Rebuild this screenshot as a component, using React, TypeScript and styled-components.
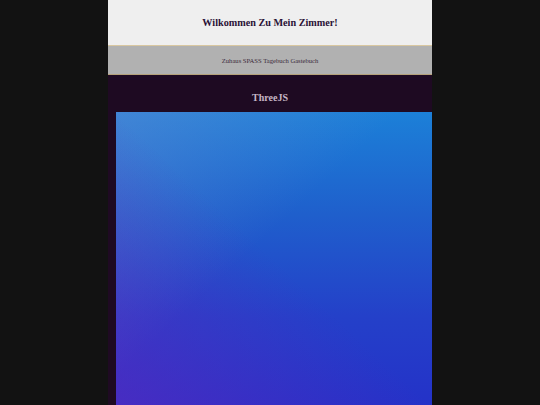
import styled, { createGlobalStyle } from 'styled-components';

const GlobalStyle = createGlobalStyle`
  html, body {
    margin: 0;
    padding: 0;
    height: 100%;
    background: #121212;
    overflow: hidden;
  }
  #root {
    height: 100%;
  }
`;

const Page = styled.div`
  width: 324px;
  height: 100%;
  margin: 0 auto;
  display: flex;
  flex-direction: column;
  background: #1e0a22;
  font-family: 'Liberation Serif', 'Times New Roman', serif;
`;

const Header = styled.header`
  height: 45px;
  display: flex;
  align-items: center;
  justify-content: center;
  background: #efefef;
  border-bottom: 1px solid #d9c7a0;
`;

const Title = styled.h1`
  margin: 0;
  font-size: 10.2px;
  font-weight: bold;
  color: #2a1236;
`;

const Nav = styled.nav`
  height: 28px;
  display: flex;
  align-items: center;
  justify-content: center;
  background: #b1b1b1;
  border-bottom: 1px solid #b5a27a;
`;

const NavLinks = styled.div`
  font-size: 6.6px;
  color: #3a2a3a;
  white-space: pre;
`;

const Section = styled.section`
  flex: 1;
  display: flex;
  flex-direction: column;
  padding-left: 8px;
  min-height: 0;
`;

const SectionTitle = styled.h2`
  margin: 0;
  height: 37px;
  box-sizing: border-box;
  padding: 7px 8px 0 0;
  display: flex;
  align-items: center;
  justify-content: center;
  font-size: 10px;
  font-weight: bold;
  color: #c6b6c6;
`;

const Canvas = styled.div`
  flex: 1;
  background:
    linear-gradient(to top right, rgba(95, 40, 190, 0.6) 0%, rgba(95, 40, 190, 0) 50%),
    linear-gradient(to bottom right, rgba(110, 140, 210, 0.45) 0%, rgba(110, 140, 210, 0) 45%),
    linear-gradient(to bottom, #1c80d8 0%, #1f5fcc 35%, #2440c9 70%, #2432c8 100%);
`;

export default function App() {
  return (
    <>
      <GlobalStyle />
      <Page>
        <Header>
          <Title>Wilkommen Zu Mein Zimmer!</Title>
        </Header>
        <Nav>
          <NavLinks>Zuhaus SPASS Tagebuch Gastebuch</NavLinks>
        </Nav>
        <Section>
          <SectionTitle>ThreeJS</SectionTitle>
          <Canvas />
        </Section>
      </Page>
    </>
  );
}
